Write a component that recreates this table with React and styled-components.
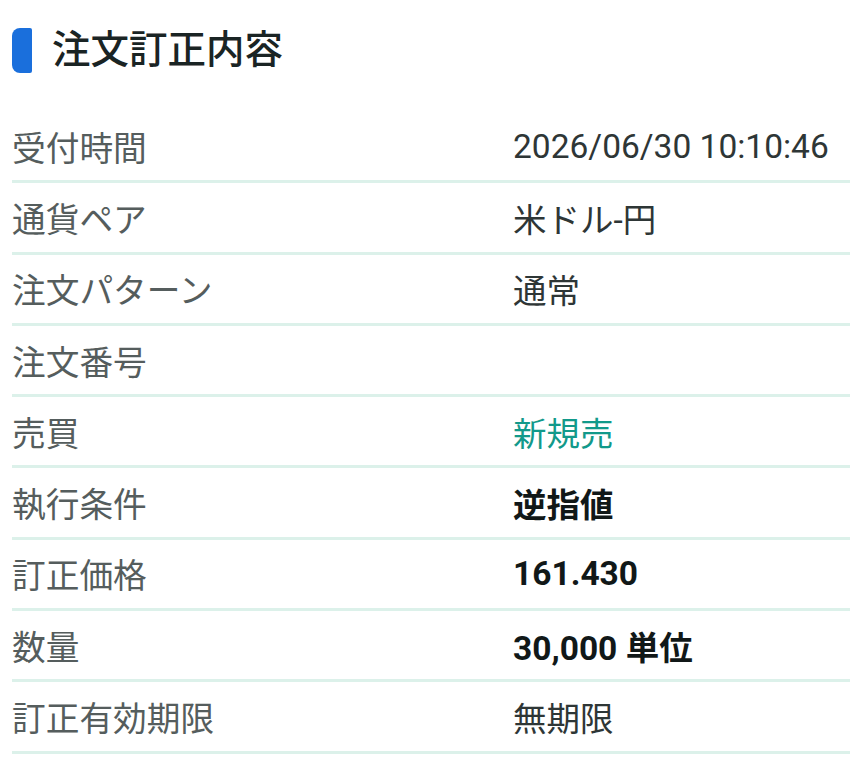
import React from 'react'
import styled, { createGlobalStyle } from 'styled-components'

const GlobalStyle = createGlobalStyle`
  body {
    margin: 0;
    background: #ffffff;
    font-family: Roboto, "Noto Sans CJK JP", sans-serif;
  }
`

const rows = [
  { label: '受付時間', value: '2026/06/30 10:10:46' },
  { label: '通貨ペア', value: '米ドル-円' },
  { label: '注文パターン', value: '通常' },
  { label: '注文番号', value: '' },
  { label: '売買', value: '新規売', tone: 'sell' },
  { label: '執行条件', value: '逆指値', strong: true },
  { label: '訂正価格', value: '161.430', strong: true },
  { label: '数量', value: '30,000 単位', strong: true },
  { label: '訂正有効期限', value: '無期限' },
]

function App() {
  return (
    <>
      <GlobalStyle />
      <Page>
        <Heading>
          <Bar />
          <Title>注文訂正内容</Title>
        </Heading>
        <List>
          {rows.map((row) => (
            <Row key={row.label}>
              <Label>{row.label}</Label>
              <Value $tone={row.tone} $strong={row.strong}>
                {row.value}
              </Value>
            </Row>
          ))}
        </List>
      </Page>
    </>
  )
}

export default App

const Page = styled.div`
  padding: 28px 0 0 12px;
`

const Heading = styled.div`
  display: flex;
  align-items: center;
  gap: 20px;
  height: 45px;
  margin-bottom: 39px;
`

const Bar = styled.div`
  width: 20px;
  height: 45px;
  background: #1a6fdc;
  border-radius: 8px 2px 2px 8px;
`

const Title = styled.h1`
  margin: 0;
  font-size: 38.5px;
  font-weight: 500;
  color: #1a2424;
  line-height: 1;
`

const List = styled.div`
  display: flex;
  flex-direction: column;
`

const Row = styled.div`
  display: grid;
  grid-template-columns: 501px 1fr;
  align-items: center;
  height: 71.3px;
  box-sizing: border-box;
  border-bottom: 3px solid #dcf1ea;
`

const Label = styled.div`
  font-size: 33.7px;
  color: #555d5d;
`

const Value = styled.div`
  font-size: 33.5px;
  color: ${(p) => (p.$tone === 'sell' ? '#12998a' : p.$strong ? '#111818' : '#2e3636')};
  font-weight: ${(p) => (p.$strong ? 700 : 400)};
`
